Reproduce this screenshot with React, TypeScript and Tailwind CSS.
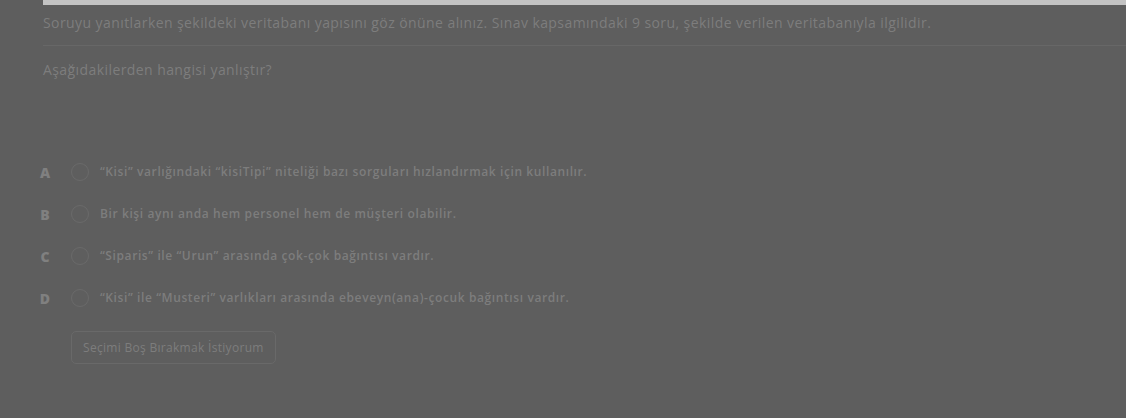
import React from "react";

const options = [
  { k: "A", t: "“Kisi” varlığındaki “kisiTipi” niteliği bazı sorguları hızlandırmak için kullanılır." },
  { k: "B", t: "Bir kişi aynı anda hem personel hem de müşteri olabilir." },
  { k: "C", t: "“Siparis” ile “Urun” arasında çok-çok bağıntısı vardır." },
  { k: "D", t: "“Kisi” ile “Musteri” varlıkları arasında ebeveyn(ana)-çocuk bağıntısı vardır." },
];

export default function App() {
  return (
    <div className="w-[1126px] h-[418px] bg-[#5e5e5e] overflow-hidden" style={{ fontFamily: "'Open Sans', 'Noto Sans', sans-serif" }}>
      <div className="pl-[43px]">
        <div className="h-[5px] bg-[#c3c3c3]" />
        <p className="text-[14px] leading-[18px] tracking-[0.42px] text-[#7d7d7d] mt-[9px]">
          Soruyu yanıtlarken şekildeki veritabanı yapısını göz önüne alınız. Sınav kapsamındaki 9 soru, şekilde verilen veritabanıyla ilgilidir.
        </p>
        <div className="h-px bg-[#676767] mt-[13px]" />
        <p className="text-[14px] leading-[18px] tracking-[0.42px] text-[#7d7d7d] mt-[15px]">Aşağıdakilerden hangisi yanlıştır?</p>
      </div>
      <div className="pl-[39px] mt-[84px] flex flex-col gap-[24px]">
        {options.map((o) => (
          <div key={o.k} className="flex items-center h-[18px]">
            <span className="w-[12px] text-[14px] font-extrabold text-[#808080] text-center">{o.k}</span>
            <span className="ml-[20px] w-[18px] h-[18px] rounded-full border border-[#6a6a6a]" />
            <span className="ml-[11px] text-[12px] font-semibold tracking-[0.6px] text-[#7d7d7d]">{o.t}</span>
          </div>
        ))}
      </div>
      <div className="pl-[71px] mt-[24px]">
        <button className="h-[33px] px-[11px] rounded-[5px] border border-[#696969] text-[12px] tracking-[0.3px] text-[#7d7d7d]">
          Seçimi Boş Bırakmak İstiyorum
        </button>
      </div>
    </div>
  );
}
